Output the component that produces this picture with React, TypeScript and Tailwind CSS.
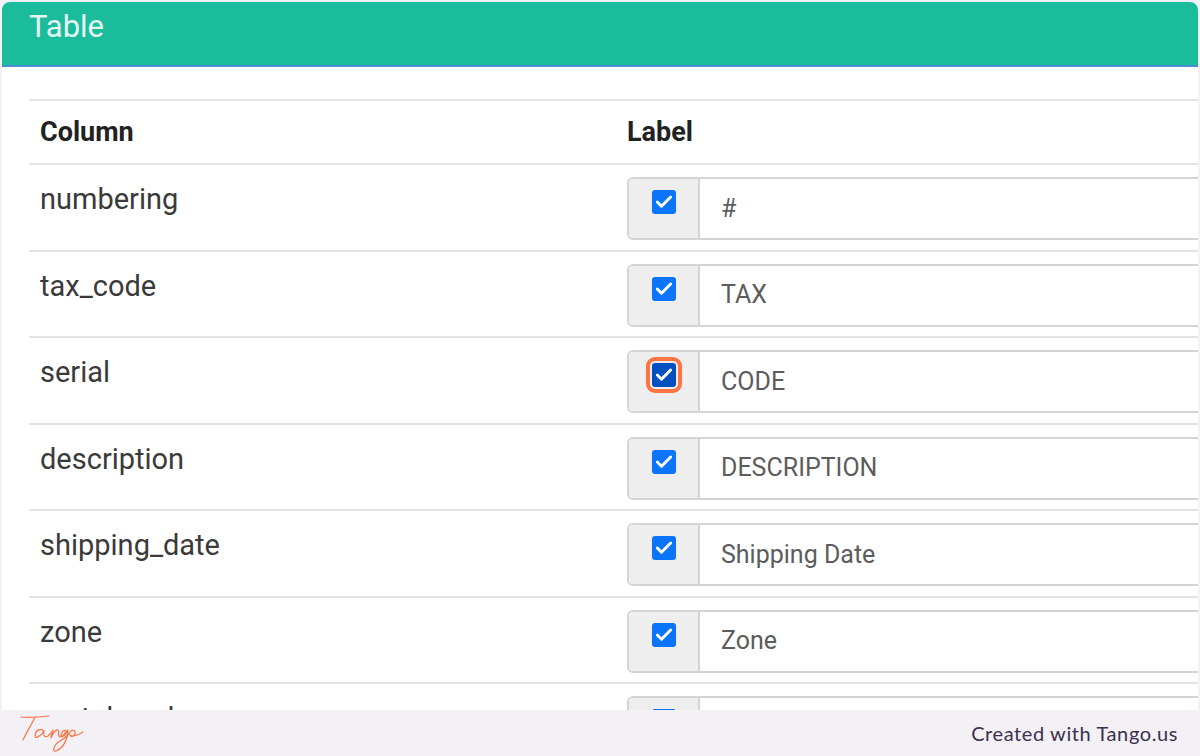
import { Check } from 'lucide-react';

const rows = [
  { column: 'numbering', label: '#' },
  { column: 'tax_code', label: 'TAX' },
  { column: 'serial', label: 'CODE', focused: true },
  { column: 'description', label: 'DESCRIPTION' },
  { column: 'shipping_date', label: 'Shipping Date' },
  { column: 'zone', label: 'Zone' },
  { column: 'rental_code', label: '' },
];

function LabelInput({ label, focused }: { label: string; focused?: boolean }) {
  return (
    <div className="flex h-[63px] -mr-2 rounded-l-[6px] border-2 border-[#d4d4d4]">
      <div className="flex w-[71px] shrink-0 justify-center pt-[11px] bg-[#eeeeee] border-r-2 border-[#d4d4d4] rounded-l-[5px]">
        <span
          className={
            focused
              ? 'flex h-[24px] w-[24px] items-center justify-center rounded-[3px] bg-[#0050c0] outline-[4px] outline-offset-[2px] outline-[#ff7442]'
              : 'flex h-[24px] w-[24px] items-center justify-center rounded-[3px] bg-[#0a75fb]'
          }
        >
          <Check className="h-[20px] w-[20px] text-white" strokeWidth={3.5} />
        </span>
      </div>
      <div className="flex flex-1 items-center bg-white pl-[21px] text-[25px] text-[#5c5c5c]">{label}</div>
    </div>
  );
}

export default function App() {
  return (
    <div className="flex h-[756px] w-[1200px] flex-col overflow-hidden bg-[#f3f1f6] font-['Roboto',sans-serif]">
      <div className="mx-[2px] mt-[2px] min-h-0 flex-1 overflow-hidden rounded-t-[8px] bg-white">
        <div className="h-[65px] border-b-2 border-[#4a90d0] bg-[#1abc9c] pl-[27px] pt-[3px] text-[31px] leading-[44px] text-[#e4f6f1]">
          Table
        </div>
        <div className="ml-[27px] mt-[32px] border-t-2 border-[#e3e3e3]">
          <div className="flex h-[64px] items-center border-b-2 border-[#e3e3e3] text-[27px] font-bold text-[#222222]">
            <div className="w-[598px] pl-[11px]">Column</div>
            <div>Label</div>
          </div>
          {rows.map((row) => (
            <div key={row.column} className="flex h-[86.5px] border-b-2 border-[#e3e3e3] pt-[12px]">
              <div className="w-[598px] pl-[11px] text-[29px] leading-[44px] text-[#3a3a3a]">{row.column}</div>
              <div className="flex-1">
                <LabelInput label={row.label} focused={row.focused} />
              </div>
            </div>
          ))}
        </div>
      </div>
      <div className="flex h-[46px] shrink-0 items-center justify-between rounded-b-[8px] bg-[#f3f1f6] pl-[20px] pr-[22px]">
        <svg width="70" height="42" viewBox="0 0 70 42" fill="none" stroke="#ff7442" strokeWidth="1.2" strokeLinecap="round" strokeLinejoin="round">
          <path d="M1 5 C10 6 20 5 29 4" />
          <path d="M15 5 C12 12 8 17 3 28" />
          <path d="M24 19 C20 15 15 19 15 24 C15 27 20 25 24 19 C23 23 24 26 28 24 C30 22 32 20 33 18 C32 21 31 24 31 26 C33 21 36 17 38 18 C40 19 37 24 40 25 C43 25 45 21 47 19 C44 17 41 20 41 24 C42 26 46 23 48 18 C48 26 44 36 36 39 C32 40 33 33 40 29 C44 27 47 24 49 22 C50 18 54 17 55 20 C56 24 51 26 50 23 C52 25 58 23 63 20" />
        </svg>
        <span className="font-['Lato',sans-serif] text-[20px] tracking-[0.6px] text-[#3c2f4f]">Created with Tango.us</span>
      </div>
    </div>
  );
}
